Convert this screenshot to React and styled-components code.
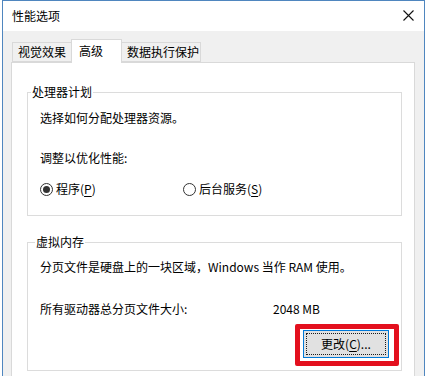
import React from 'react';
import styled, { createGlobalStyle } from 'styled-components';

const GlobalStyle = createGlobalStyle`
  html, body {
    margin: 0;
    padding: 0;
    background: #ffffff;
  }
  body {
    font-family: "Noto Sans CJK SC", "Noto Sans", sans-serif;
    font-size: 12px;
    color: #000;
  }
`;

const App = () => {
  return (
    <Page>
      <GlobalStyle />
      <Window>
        <TitleBar>
          <Title>性能选项</Title>
          <CloseButton>
            <svg width="11" height="11" viewBox="0 0 11 11">
              <path d="M0.5 0.5 L10.5 10.5 M10.5 0.5 L0.5 10.5" stroke="#111" strokeWidth="1.1" fill="none" />
            </svg>
          </CloseButton>
        </TitleBar>
        <Body>
          <TabList>
            <Tab $w={60}>视觉效果</Tab>
            <Tab $w={51} $active>高级</Tab>
            <Tab $w={80}>数据执行保护</Tab>
          </TabList>
          <Panel>
            <Group>
              <Legend>处理器计划</Legend>
              <GroupBody $top={10} $bottom={18}>
                <Line>选择如何分配处理器资源。</Line>
                <Line $gap={24}>调整以优化性能:</Line>
                <RadioRow>
                  <RadioOption $w={143}>
                    <Radio $checked />
                    <span>程序(<U>P</U>)</span>
                  </RadioOption>
                  <RadioOption>
                    <Radio />
                    <span>后台服务(<U>S</U>)</span>
                  </RadioOption>
                </RadioRow>
              </GroupBody>
            </Group>
            <Group $mt={18}>
              <Legend $indent={4}>虚拟内存</Legend>
              <GroupBody $top={9} $bottom={4}>
                <Line>分页文件是硬盘上的一块区域，Windows 当作 RAM 使用。</Line>
                <SizeRow>
                  <SizeLabel>所有驱动器总分页文件大小:</SizeLabel>
                  <span>2048 MB</span>
                </SizeRow>
                <ButtonRow>
                  <Highlight>
                    <Button>
                      <FocusRect>更改(<U>C</U>)...</FocusRect>
                    </Button>
                  </Highlight>
                </ButtonRow>
              </GroupBody>
            </Group>
          </Panel>
        </Body>
      </Window>
    </Page>
  );
};

const Page = styled.div`
  width: 427px;
  height: 376px;
  overflow: hidden;
  padding-left: 2px;
  box-sizing: border-box;
`;

const Window = styled.div`
  width: 423px;
  height: 376px;
  box-sizing: border-box;
  border: 1px solid #4f86bf;
  border-bottom: none;
  display: flex;
  flex-direction: column;
  overflow: hidden;
`;

const TitleBar = styled.div`
  height: 30px;
  flex-shrink: 0;
  background: #ffffff;
  display: flex;
  align-items: center;
  justify-content: space-between;
  padding: 0 10px 0 9px;
`;

const Title = styled.span`
  font-size: 12px;
  line-height: 16px;
  margin-top: -1px;
`;

const CloseButton = styled.div`
  display: flex;
  align-items: center;
  margin-right: 0;
  margin-top: -1px;
`;

const Body = styled.div`
  flex: 1;
  background: #f0f0f0;
  padding: 9px 9px 0 8px;
  display: flex;
  flex-direction: column;
`;

const TabList = styled.div`
  display: flex;
  align-items: flex-end;
  padding-left: 1px;
  height: 23px;
  margin-bottom: -1px;
  position: relative;
  z-index: 1;
`;

const Tab = styled.div`
  width: ${p => p.$w}px;
  box-sizing: border-box;
  height: ${p => (p.$active ? 24 : 20)}px;
  margin-left: -1px;
  margin-bottom: ${p => (p.$active ? 0 : 1)}px;
  padding: ${p => (p.$active ? '0 0 2px 7px' : '0 0 0 5px')};
  display: flex;
  align-items: center;
  background: ${p => (p.$active ? '#ffffff' : '#f0f0f0')};
  border: 1px solid #d9d9d9;
  border-bottom: ${p => (p.$active ? 'none' : '1px solid #d9d9d9')};
  line-height: 16px;
  position: relative;
  z-index: ${p => (p.$active ? 2 : 1)};
  &:first-child {
    margin-left: 0;
  }
`;

const Panel = styled.div`
  flex: 1;
  background: #ffffff;
  border: 1px solid #d9d9d9;
  padding: 21px 12px 0 15px;
  min-height: 340px;
`;

const Group = styled.fieldset`
  margin: ${p => p.$mt || 0}px 0 0 0;
  padding: 0 0 0 3px;
  border: 1px solid #dcdcdc;
  min-width: 0;
`;

const Legend = styled.legend`
  padding: 0 1px;
  margin-left: ${p => p.$indent || 0}px;
  font-size: 12px;
  line-height: 16px;
`;

const GroupBody = styled.div`
  padding: ${p => p.$top}px 0 ${p => p.$bottom}px 9px;
  display: flex;
  flex-direction: column;
`;

const Line = styled.div`
  line-height: 16px;
  margin-top: ${p => p.$gap || 0}px;
  white-space: nowrap;
`;

const U = styled.span`
  text-decoration: underline;
  text-underline-offset: 2px;
`;

const RadioRow = styled.div`
  display: flex;
  align-items: center;
  margin-top: 15px;
  line-height: 16px;
`;

const RadioOption = styled.label`
  display: flex;
  align-items: center;
  gap: 3px;
  width: ${p => (p.$w ? `${p.$w}px` : 'auto')};
`;

const Radio = styled.span`
  width: 13px;
  height: 13px;
  box-sizing: border-box;
  border: 1px solid #333;
  border-radius: 50%;
  background: #fff;
  display: flex;
  align-items: center;
  justify-content: center;
  &::after {
    content: '';
    width: 7px;
    height: 7px;
    border-radius: 50%;
    background: ${p => (p.$checked ? '#333' : 'transparent')};
  }
`;

const SizeRow = styled.div`
  display: flex;
  line-height: 16px;
  margin-top: 26px;
  white-space: nowrap;
`;

const SizeLabel = styled.span`
  width: 233px;
`;

const ButtonRow = styled.div`
  display: flex;
  justify-content: flex-end;
  padding-right: 2px;
  margin-top: 7px;
`;

const Highlight = styled.div`
  border: 5px solid #e3101e;
  border-radius: 2px;
  padding: 1px 5px 3px 3px;
  background: #fff;
`;

const Button = styled.div`
  width: 86px;
  height: 28px;
  box-sizing: border-box;
  border: 1px solid #0078d7;
  background: #e1e1e1;
  padding: 2px;
  display: flex;
`;

const FocusRect = styled.div`
  flex: 1;
  border: 1px dotted #1a1a1a;
  display: flex;
  align-items: center;
  justify-content: center;
  line-height: 16px;
`;

export default App;
